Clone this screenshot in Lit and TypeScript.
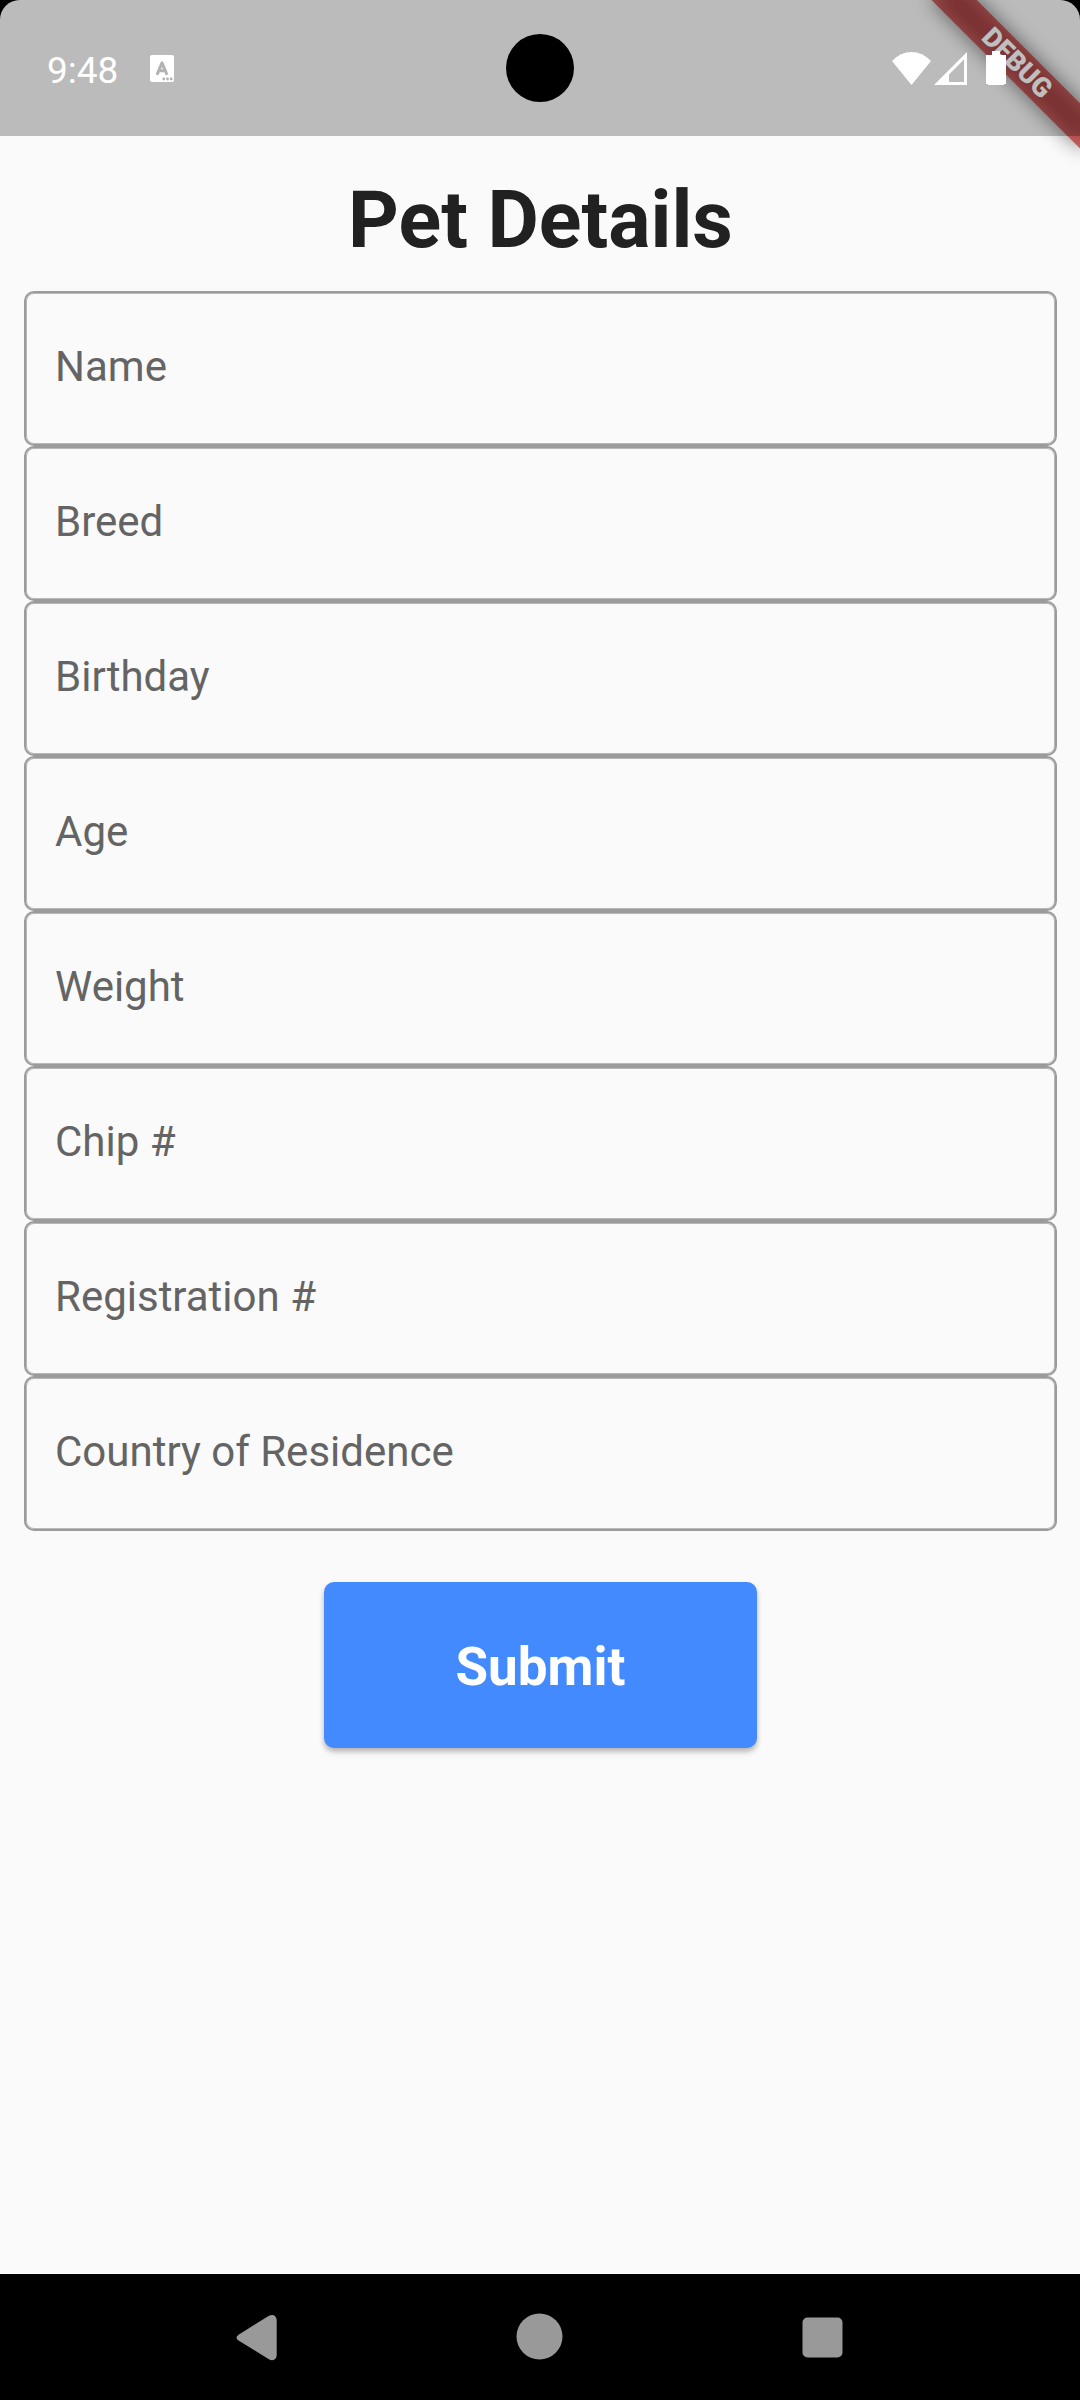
import { LitElement, html, css, svg } from "lit";
import { customElement, property, state } from "lit/decorators.js";

@customElement("status-bar")
class StatusBar extends LitElement {
  static styles = css`
    :host {
      display: block;
    }
    .bar {
      position: relative;
      display: flex;
      align-items: center;
      justify-content: space-between;
      height: 136px;
      padding: 0 74px 0 47px;
      box-sizing: border-box;
      background: rgba(0, 0, 0, 0.25);
      color: #fff;
    }
    .group {
      display: flex;
      align-items: center;
    }
    .time {
      font-size: 37px;
      line-height: 44px;
      margin: 4px 32px 0 0;
      padding-top: 2px;
    }
    .camera {
      position: absolute;
      left: 50%;
      top: 34px;
      width: 68px;
      height: 68px;
      margin-left: -34px;
      border-radius: 50%;
      background: #000;
    }
    .signal {
      margin: 0 19px 0 3px;
    }
    svg {
      display: block;
      fill: #fff;
    }
  `;

  render() {
    return html`
      <div class="bar">
        <div class="group">
          <span class="time">9:48</span>
          <svg width="24" height="27" viewBox="0 0 24 27" aria-hidden="true">
            <rect width="24" height="27" rx="2" />
            <path
              d="M7.500 18.600L12 7.800L16.500 18.600M9 15.800H15"
              fill="none"
              stroke="#b2b2b2"
              stroke-width="3"
              stroke-linecap="round"
              stroke-linejoin="round"
            />
            <g fill="#b2b2b2">
              <circle cx="13.800" cy="24" r="1.400" />
              <circle cx="17.500" cy="24" r="1.400" />
              <circle cx="21.200" cy="24" r="1.400" />
            </g>
          </svg>
        </div>
        <div class="camera"></div>
        <div class="group">
          <svg width="39" height="33" viewBox="0 0 39 33" aria-hidden="true">
            <path d="M19.500 33L0 9Q8.500 0 19.500 0Q30.500 0 39 9Z" />
          </svg>
          <svg class="signal" width="33" height="33" viewBox="0 0 33 33" aria-hidden="true">
            <path fill-rule="evenodd" d="M33 0V33H0ZM30 7.500L15 22.500V30H30Z" />
          </svg>
          <svg width="20" height="34" viewBox="0 0 20 34" aria-hidden="true">
            <path d="M6 0H14V4H20V33H18V34H2V33H0V4H6Z" />
          </svg>
        </div>
      </div>
    `;
  }
}

@customElement("debug-banner")
class DebugBanner extends LitElement {
  static styles = css`
    :host {
      position: absolute;
      top: 0;
      right: 0;
      width: 240px;
      height: 240px;
      overflow: hidden;
      pointer-events: none;
    }
    .pivot {
      position: absolute;
      top: 0;
      right: 0;
      width: 0;
      height: 0;
      transform: rotate(45deg);
    }
    .shadow,
    .ribbon {
      position: absolute;
      left: -105px;
      top: 73px;
      width: 210px;
      height: 32px;
    }
    .shadow {
      background: rgba(0, 0, 0, 0.5);
      filter: blur(10px);
    }
    .ribbon {
      background: rgba(183, 28, 28, 0.63);
      color: #fff;
      font-size: 27px;
      font-weight: 900;
      line-height: 32px;
      text-align: center;
    }
  `;

  render() {
    return html`
      <div class="pivot">
        <div class="shadow"></div>
        <div class="ribbon">DEBUG</div>
      </div>
    `;
  }
}

@customElement("text-field")
class TextField extends LitElement {
  @property() label = "";
  @state() private value = "";

  static styles = css`
    :host {
      display: block;
    }
    .field {
      display: grid;
      align-items: center;
      height: 155px;
      box-sizing: border-box;
      border: 2px solid #9b9b9b;
      border-radius: 10px;
      box-shadow: inset 0 0 0 1px #b8b8b8;
    }
    .label,
    .input {
      grid-area: 1 / 1;
      padding: 0 29px 4px;
      font-size: 42px;
      line-height: 50px;
    }
    .label {
      color: #646464;
      pointer-events: none;
    }
    .filled {
      visibility: hidden;
    }
    .input {
      width: 100%;
      height: 100%;
      box-sizing: border-box;
      border: 0;
      outline: 0;
      background: none;
      color: #212121;
      font-family: inherit;
    }
  `;

  render() {
    return html`
      <div class="field">
        <label class="label ${this.value ? "filled" : ""}" for="input">${this.label}</label>
        <input
          class="input"
          id="input"
          type="text"
          .value=${this.value}
          @input=${(e: Event) => (this.value = (e.target as HTMLInputElement).value)}
        />
      </div>
    `;
  }
}

@customElement("nav-bar")
class NavBar extends LitElement {
  static styles = css`
    :host {
      display: block;
    }
    .bar {
      display: flex;
      align-items: center;
      justify-content: center;
      gap: 157px;
      height: 126px;
      background: #000;
    }
    .key {
      display: flex;
      align-items: center;
      justify-content: center;
      width: 126px;
      height: 126px;
      padding: 0;
      border: 0;
      background: none;
    }
    svg {
      display: block;
      fill: #999;
    }
  `;

  private key(name: string, shape: unknown) {
    return html`
      <button class="key" type="button" aria-label=${name}>
        <svg width="48" height="48" viewBox="0 0 48 48">${shape}</svg>
      </button>
    `;
  }

  render() {
    return html`
      <nav class="bar">
        ${this.key(
          "Back",
          svg`<path d="M5.500 21.800L35.500 3C39.500 0.700 43.700 2.500 43.700 7.500V42C43.700 47 39.500 48.500 35.500 46L5.500 27.500Q1.500 24.600 5.500 21.800Z" />`
        )}
        ${this.key("Home", svg`<circle cx="23.500" cy="23.500" r="23" />`)}
        ${this.key("Overview", svg`<rect x="3.500" y="4.500" width="40" height="40" rx="5" />`)}
      </nav>
    `;
  }
}

@customElement("app-root")
class AppRoot extends LitElement {
  private fields = [
    "Name",
    "Breed",
    "Birthday",
    "Age",
    "Weight",
    "Chip #",
    "Registration #",
    "Country of Residence",
  ];

  static styles = css`
    :host {
      display: block;
      background: #000;
      font-family: Roboto, "Liberation Sans", sans-serif;
    }
    .screen {
      position: relative;
      display: flex;
      flex-direction: column;
      min-height: 100vh;
      overflow: hidden;
      border-radius: 20px 20px 0 0;
      background: #fafafa;
    }
    .status {
      position: relative;
      z-index: 1;
    }
    .content {
      flex: 1;
      padding: 38px 23px 48px 24px;
    }
    .title {
      margin: 0 0 25px;
      color: #212121;
      font-size: 79px;
      font-weight: 700;
      line-height: 92px;
      text-align: center;
    }
    .form {
      display: flex;
      flex-direction: column;
    }
    .submit {
      align-self: center;
      width: 42%;
      height: 166px;
      margin-top: 51px;
      padding: 4px 0 0;
      border: 0;
      border-radius: 10px;
      background: #448aff;
      box-shadow: 0 3px 5px rgba(0, 0, 0, 0.2), 0 5px 6px rgba(0, 0, 0, 0.1);
      color: #fff;
      font-family: inherit;
      font-size: 53px;
      font-weight: 700;
      line-height: 60px;
    }
  `;

  render() {
    return html`
      <div class="screen">
        <status-bar class="status"></status-bar>
        <main class="content">
          <h1 class="title">Pet Details</h1>
          <form class="form" @submit=${(e: Event) => e.preventDefault()}>
            ${this.fields.map((f) => html`<text-field label=${f}></text-field>`)}
            <button class="submit" type="submit">Submit</button>
          </form>
        </main>
        <nav-bar></nav-bar>
        <debug-banner></debug-banner>
      </div>
    `;
  }
}
